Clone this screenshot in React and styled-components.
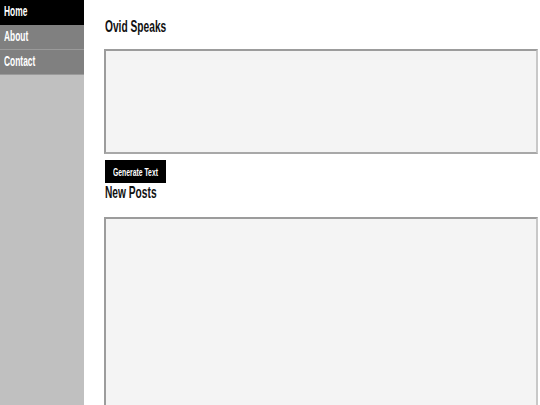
import React from 'react'
import styled, { createGlobalStyle } from 'styled-components'

const GlobalStyle = createGlobalStyle`
    html, body {
        margin: 0;
        padding: 0;
        height: 100%;
        background: white;
        font-family: "Liberation Sans", Arial, sans-serif;
    }
    #root {
        height: 100%;
    }
`;

const Page = styled.div`
    display: flex;
    height: 405px;
    overflow: hidden;
`;

const Sidebar = styled.nav`
    width: 84px;
    flex-shrink: 0;
    background: #c0c0c0;
    display: flex;
    flex-direction: column;
`;

const NavItem = styled.a`
    display: flex;
    align-items: center;
    height: 24px;
    padding: 0 0 2px 4px;
    box-sizing: border-box;
    height: 25px;
    border-bottom: 1px solid ${p => (p.active ? '#000' : '#9a9a9a')};
    background: ${p => (p.active ? '#000' : '#808080')};
    color: white;
    font-size: 14px;
    font-weight: bold;
    text-decoration: none;
    cursor: pointer;
`;

const Narrow = styled.span`
    display: inline-block;
    transform: scaleX(${p => p.scale || 0.6});
    transform-origin: left center;
    white-space: nowrap;
`;

const Main = styled.main`
    flex: 1;
    padding: 0 2px 0 20px;
    display: flex;
    flex-direction: column;
`;

const Title = styled.h2`
    margin: ${p => p.top}px 0 0 1px;
    height: 30px;
    font-size: 17px;
    line-height: 16px;
    font-weight: bold;
    color: #111;
`;

const TextBox = styled.div`
    height: 101px;
    background: #f4f4f4;
    border: 2px solid;
    border-color: #9c9c9c #c8c8c8 #a8a8a8 #9c9c9c;
`;

const Button = styled.button`
    align-self: flex-start;
    margin: 6px 0 0 1px;
    width: 61px;
    height: 23px;
    padding: 0 0 0 8px;
    border: none;
    background: #000;
    color: white;
    font-family: inherit;
    font-size: 11px;
    font-weight: bold;
    text-align: left;
    cursor: pointer;
`;

const PostsBox = styled(TextBox)`
    flex: 1;
    height: auto;
    margin-top: 2px;
    border-bottom: none;
`;

export default function App() {
    return (
        <>
            <GlobalStyle />
            <Page>
                <Sidebar>
                    <NavItem active><Narrow>Home</Narrow></NavItem>
                    <NavItem><Narrow>About</Narrow></NavItem>
                    <NavItem><Narrow>Contact</Narrow></NavItem>
                </Sidebar>
                <Main>
                    <Title top={19}><Narrow>Ovid Speaks</Narrow></Title>
                    <TextBox />
                    <Button><Narrow scale={0.62}>Generate Text</Narrow></Button>
                    <Title top={2}><Narrow>New Posts</Narrow></Title>
                    <PostsBox />
                </Main>
            </Page>
        </>
    );
}
